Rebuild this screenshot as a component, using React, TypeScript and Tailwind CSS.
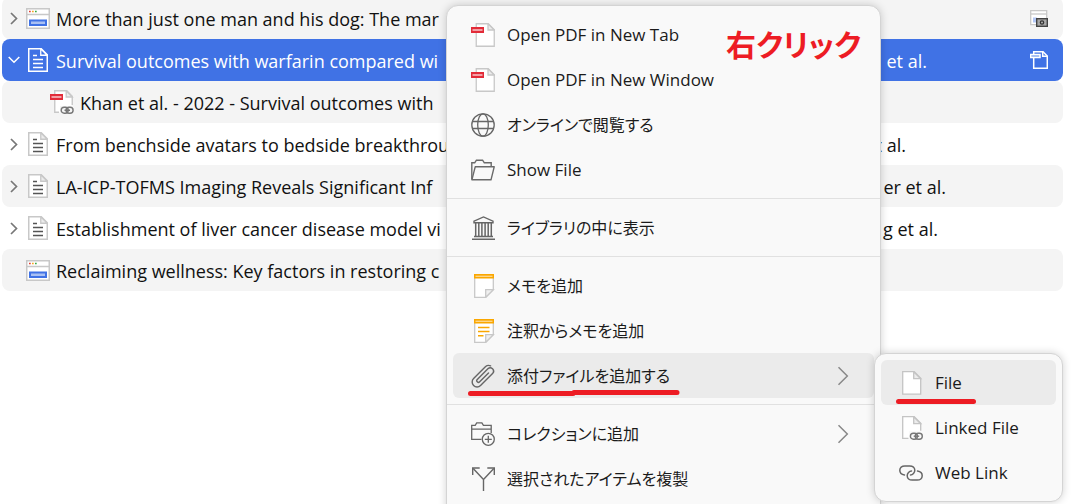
import React from 'react';
import clsx from 'clsx';

type IconProps = { selected?: boolean };

function ChevronRight() {
  return (
    <svg className="w-2 h-[13px]" viewBox="0 0 8 13" fill="none" stroke="currentColor" strokeWidth="1.7">
      <path d="M1 1l5.500 5.500L1 12" />
    </svg>
  );
}

function ChevronDown() {
  return (
    <svg className="w-3 h-2" viewBox="0 0 12 8" fill="none" stroke="currentColor" strokeWidth="1.5">
      <path d="M.7 1L6 6.300 11.300 1" />
    </svg>
  );
}

function SubmenuArrow() {
  return (
    <svg className="w-3 h-5 text-[#888]" viewBox="0 0 12 20" fill="none" stroke="currentColor" strokeWidth="1.500">
      <path d="M1.500 1.200L10.300 10l-8.800 8.800" />
    </svg>
  );
}

function ArticleIcon({ selected }: IconProps) {
  const outline = selected ? '#fff' : '#c8c8c8';
  return (
    <svg className="w-5 h-6" viewBox="0 0 20 24" fill="none">
      <path d="M.75.75h12.500l6 6v16.500H.75z" fill={selected ? 'none' : '#fff'} stroke={outline} strokeWidth="1.5" />
      <path d="M12.750.75v6.500h6.500z" fill={selected ? 'none' : '#ececec'} stroke={outline} strokeWidth="1.300" />
      <path d="M5 7.500h4M5 11.500h10M5 15.500h10M5 19.500h10" stroke={selected ? '#fff' : '#555'} strokeWidth="1.500" />
    </svg>
  );
}

function WebPageIcon() {
  return (
    <svg className="w-6 h-[21px]" viewBox="0 0 24 21" fill="none">
      <path d="M.75.75h22.500v19.500H.75z" fill="#fff" stroke="#c8c8c8" strokeWidth="1.5" />
      <path d="M1 6.500h22" stroke="#c8c8c8" strokeWidth="1.3" />
      <path d="M3 3.500h1.700" stroke="#e03a2e" strokeWidth="1.6" />
      <path d="M6 3.500h1.700" stroke="#f5a623" strokeWidth="1.6" />
      <path d="M9 3.500h1.700" stroke="#39a845" strokeWidth="1.6" />
      <path d="M3 11.500h18v6.500H3z" fill="#4072e5" />
      <path d="M5 14.700h14" stroke="#a9c0f3" strokeWidth="2.5" />
    </svg>
  );
}

function PdfLabel() {
  return (
    <>
      <path d="M0 4h13v6H0z" fill="#e22b38" />
      <path d="M1.500 7h10" stroke="#f2a0a6" strokeWidth="2" />
    </>
  );
}

function PdfIcon() {
  return (
    <svg className="size-6" viewBox="0 0 24 24" fill="none">
      <path d="M5.250.75h12l6 6v16.500h-18z" fill="#fff" stroke="#c8c8c8" strokeWidth="1.300" />
      <path d="M17 .75v6.250h6.250z" fill="#ececec" stroke="#c8c8c8" strokeWidth="1.300" />
      <PdfLabel />
    </svg>
  );
}

function SmallLink({ x, y }: { x: number; y: number }) {
  return (
    <g transform={`translate(${x} ${y})`} stroke="#777" strokeWidth="1.400" fill="none">
      <rect x=".7" y=".7" width="7" height="6" rx="3" />
      <rect x="5.600" y=".7" width="7" height="6" rx="3" />
      <path d="M4 3.700h5.500" />
    </g>
  );
}

function LinkedPdfIcon() {
  return (
    <svg className="size-6" viewBox="0 0 24 24" fill="none">
      <path d="M4.750.75h12l5.500 5.500V16H10v6.500H4.750z" fill="#fff" />
      <path d="M9 22.300H4.750V.75h12l5.500 5.500V15" stroke="#c8c8c8" strokeWidth="1.400" />
      <path d="M16.200.75V7h6z" fill="#ececec" stroke="#c8c8c8" strokeWidth="1.300" />
      <PdfLabel />
      <SmallLink x={10.500} y={16.500} />
    </svg>
  );
}

function SnapshotIcon() {
  return (
    <svg className="w-[18px] h-[17px]" viewBox="0 0 18 17" fill="none">
      <path d="M.7.7h16v14H.7z" fill="#fff" stroke="#c8c8c8" strokeWidth="1.300" />
      <path d="M1 4h15.500" stroke="#c8c8c8" strokeWidth="1.300" />
      <path d="M3 7.500h4v5H3z" fill="#b3c7f5" />
      <rect x="6.700" y="8.700" width="10.600" height="7.600" fill="#a8a8a8" stroke="#444" strokeWidth="1.400" />
      <circle cx="12" cy="12.500" r="1.700" stroke="#333" strokeWidth="1.200" />
    </svg>
  );
}

function AttachedPdfIcon() {
  return (
    <svg className="size-[18px]" viewBox="0 0 18 18" fill="none" stroke="#fff" strokeWidth="1.500">
      <path d="M3.700 3V.7h9.300l4.300 4.300v12.300H3.700V7" />
      <path d="M12.700.7v4.600h4.600" />
      <path d="M.6 3.600h9.400v3H.6z" fill="#8cacf0" />
    </svg>
  );
}

function GlobeIcon() {
  return (
    <svg className="size-6" viewBox="0 0 24 24" fill="none" stroke="#666" strokeWidth="1.300">
      <circle cx="12" cy="12" r="11.200" />
      <ellipse cx="12" cy="12" rx="5.300" ry="11.200" />
      <path d="M1.500 8.500h21M1.500 15.500h21" />
    </svg>
  );
}

function FolderIcon() {
  return (
    <svg className="size-6" viewBox="0 0 24 24" fill="none" stroke="#6a6a6a" strokeWidth="1.400">
      <path d="M.8 21.500V4.800h2.900l1.700-2.600h6.200l1.700 2.600h6.900v4" />
      <path d="M4.200 8.800h19L20 21.800H.9z" strokeLinejoin="round" />
    </svg>
  );
}

function LibraryIcon() {
  return (
    <svg className="size-6" viewBox="0 0 24 24" fill="none" stroke="#666" strokeWidth="1.400">
      <path d="M3 6.800V5.200L12.500.9 22 5.200v1.600z" />
      <path d="M4.700 7v13M7.800 7v13M10.900 7v13M14.100 7v13M17.200 7v13M20.300 7v13" strokeWidth="1.500" />
      <path d="M3 20.500h19M1 23.200h23" />
    </svg>
  );
}

function NoteIcon({ lines }: { lines?: boolean }) {
  return (
    <svg className="size-6" viewBox="0 0 24 24" fill="none">
      <path d="M3.700 3v20.300h11l7.600-7.600V3z" fill="#fff" stroke="#c8c8c8" strokeWidth="1.300" />
      <path d="M14.700 23.300v-7.600h7.600z" fill="#f0f0f0" stroke="#c8c8c8" strokeWidth="1.300" />
      <path d="M3 0h20v4.500H3z" fill="#faa700" />
      <path d="M4.500 2.300h17" stroke="#fdd892" strokeWidth="1.300" />
      {lines && <path d="M7 8.500h11.500M7 12.500h11.500M7 16.800h5.500" stroke="#faa700" strokeWidth="1.500" />}
    </svg>
  );
}

function PaperclipIcon() {
  return (
    <svg className="size-6" viewBox="0 0 24 24" fill="none" stroke="#666" strokeWidth="1.400" strokeLinecap="round">
      <path
        transform="translate(12 12) rotate(45)"
        d="M1.800-6V6.500a1.700 1.700 0 0 1-3.400 0V-8.500a3.300 3.300 0 0 1 6.600 0V8.500a4.900 4.900 0 0 1-9.800 0V-8.500a4.500 4.500 0 0 1 3-4"
      />
    </svg>
  );
}

function AddToCollectionIcon() {
  return (
    <svg className="size-6" viewBox="0 0 24 24" fill="none" stroke="#666" strokeWidth="1.300">
      <path d="M10.500 17.300H.7V3.400h3.500L5.700.9h5.200l1.500 2.500h7.800v7.500M.7 7.100h19.500" />
      <circle cx="17.300" cy="17.300" r="6" />
      <path d="M17.300 13.800v7M13.800 17.300h7" />
    </svg>
  );
}

function DuplicateIcon() {
  return (
    <svg className="size-6" viewBox="0 0 24 24" fill="none" stroke="#666" strokeWidth="1.400">
      <path d="M12.500 24V12.500L2.200 1.500M12.500 12.500L22.800 1.500" />
      <path d="M1.700 8V1h7M16.300 1h7v7" />
    </svg>
  );
}

function FileIcon({ linked }: { linked?: boolean }) {
  return (
    <svg className="size-6" viewBox="0 0 24 24" fill="none">
      {linked ? (
        <>
          <path d="M3.700.7h11.500l6.500 6.500v8H10v7.500H3.700z" fill="#fff" />
          <path d="M9.500 22.300H3.700V.7h11.500l6.500 6.500v7.500" stroke="#c4c4c4" strokeWidth="1.300" />
        </>
      ) : (
        <path d="M3.700.7h11.500l6.500 6.500v16H3.700z" fill="#fff" stroke="#c4c4c4" strokeWidth="1.300" />
      )}
      <path d="M14.700.7v7h7z" fill="#ececec" stroke="#c4c4c4" strokeWidth="1.300" />
      {linked && <SmallLink x={10.700} y={16.500} />}
    </svg>
  );
}

function WebLinkIcon() {
  return (
    <svg className="size-6" viewBox="0 0 24 24" fill="none" stroke="#666" strokeWidth="1.500" strokeLinecap="round">
      <path d="M5.500 14C2.800 13.600.8 11.700.8 9.300c0-2.500 2.100-4.400 5-4.400h5c2.900 0 5 1.900 5 4.400s-2.100 4.700-4.300 4.700" />
      <path d="M18.500 10c2.700.4 4.700 2.300 4.700 4.700 0 2.500-2.100 4.400-5 4.400h-5c-2.900 0-5-1.900-5-4.400s2.100-4.700 4.300-4.700" />
    </svg>
  );
}

type Item = {
  title: string;
  icon: React.ReactNode;
  state?: 'open' | 'closed';
  child?: boolean;
  selected?: boolean;
  creator?: string;
  creatorWidth?: string;
  attachment?: React.ReactNode;
};

const items: Item[] = [
  { title: 'More than just one man and his dog: The mar', icon: <WebPageIcon />, state: 'closed', attachment: <SnapshotIcon /> },
  {
    title: 'Survival outcomes with warfarin compared wi',
    icon: <ArticleIcon selected />,
    state: 'open',
    selected: true,
    creator: 'et al.',
    creatorWidth: 'w-[167px]',
    attachment: <AttachedPdfIcon />,
  },
  { title: 'Khan et al. - 2022 - Survival outcomes with', icon: <LinkedPdfIcon />, child: true },
  { title: 'From benchside avatars to bedside breakthrou', icon: <ArticleIcon />, state: 'closed', creator: 'et al.', creatorWidth: 'w-[146px]' },
  { title: 'LA-ICP-TOFMS Imaging Reveals Significant Inf', icon: <ArticleIcon />, state: 'closed', creator: 'er et al.', creatorWidth: 'w-[186px]' },
  { title: 'Establishment of liver cancer disease model vi', icon: <ArticleIcon />, state: 'closed', creator: 'g et al.', creatorWidth: 'w-[178px]' },
  { title: 'Reclaiming wellness: Key factors in restoring c', icon: <WebPageIcon /> },
];

function ItemRow({ item, striped }: { item: Item; striped: boolean }) {
  return (
    <tr
      className={clsx(
        '[&>td]:p-0 [&>td:first-child]:rounded-l-lg [&>td:last-child]:rounded-r-lg',
        item.selected ? '[&>td]:bg-[#4072e5] text-white' : 'text-[#111]',
        striped && !item.selected && '[&>td]:bg-[#f4f4f4]'
      )}
    >
      <td className="h-[42px] overflow-hidden">
        <div className="flex items-center whitespace-nowrap">
          <span className={clsx('flex shrink-0 justify-center', item.child ? 'w-12' : 'w-6')}>
            {item.state && (
              <button
                type="button"
                aria-label={item.state === 'open' ? 'Collapse' : 'Expand'}
                className={item.selected ? 'text-white' : 'text-[#777]'}
              >
                {item.state === 'open' ? <ChevronDown /> : <ChevronRight />}
              </button>
            )}
          </span>
          <span className="flex w-6 shrink-0 justify-center mr-[6px]">{item.icon}</span>
          <span className="pt-[2px]">{item.title}</span>
        </div>
      </td>
      <td className="whitespace-nowrap">
        <div className={clsx('pt-[2px] text-right', item.creatorWidth)}>{item.creator}</div>
      </td>
      <td>
        <div className="flex justify-end pr-[15px]">{item.attachment}</div>
      </td>
    </tr>
  );
}

type MenuItemProps = {
  icon: React.ReactNode;
  label: string;
  lang?: 'ja';
  active?: boolean;
  submenu?: boolean;
  children?: React.ReactNode;
};

function MenuItem({ icon, label, lang, active, submenu, children }: MenuItemProps) {
  return (
    <button
      type="button"
      role="menuitem"
      lang={lang}
      className={clsx(
        'relative flex h-[45px] w-full items-center gap-3 rounded-md pl-[18px] pr-[25px] text-left whitespace-nowrap',
        lang === 'ja' ? "text-[16px] [font-feature-settings:'palt']" : 'text-[17px]',
        active && 'bg-[#ebebeb]'
      )}
    >
      {icon}
      <span className="flex-1">{label}</span>
      {submenu && <SubmenuArrow />}
      {children}
    </button>
  );
}

function Separator() {
  return <div role="separator" className="-mx-[6px] my-[6px] h-px bg-[#e1e1e1]" />;
}

export default function App() {
  return (
    <div className="relative min-h-screen overflow-hidden bg-white font-['Open_Sans','Noto_Sans_CJK_JP',sans-serif]">
      <main className="pl-[2px] pr-2">
        <table className="-mt-[3px] w-full table-fixed border-separate border-spacing-0 text-[18px] leading-7">
          <colgroup>
            <col className="w-[758px]" />
            <col />
            <col className="w-14" />
          </colgroup>
          <tbody>
            {items.map((item, i) => (
              <ItemRow key={item.title} item={item} striped={i % 2 === 0} />
            ))}
          </tbody>
        </table>
      </main>

      <div
        role="menu"
        className="absolute left-[446px] top-[5px] w-[435px] rounded-t-xl border border-[#d4d4d4] bg-[#f9f9f9] px-[6px] pt-[6px] pb-6 leading-6 text-[#1b1b1b] shadow-[0_0_8px_rgba(0,0,0,0.18)]"
      >
        <MenuItem icon={<PdfIcon />} label="Open PDF in New Tab" />
        <MenuItem icon={<PdfIcon />} label="Open PDF in New Window" />
        <MenuItem icon={<GlobeIcon />} label="オンラインで閲覧する" lang="ja" />
        <MenuItem icon={<FolderIcon />} label="Show File" />
        <Separator />
        <MenuItem icon={<LibraryIcon />} label="ライブラリの中に表示" lang="ja" />
        <Separator />
        <MenuItem icon={<NoteIcon />} label="メモを追加" lang="ja" />
        <MenuItem icon={<NoteIcon lines />} label="注釈からメモを追加" lang="ja" />
        <MenuItem icon={<PaperclipIcon />} label="添付ファイルを追加する" lang="ja" active submenu>
          <svg className="absolute left-[15px] top-9 h-2 w-[212px]" viewBox="0 0 212 8" stroke="#ed1c24" strokeWidth="5" strokeLinecap="round">
            <path d="M2.500 4.500H105M106 3.500h103" />
          </svg>
        </MenuItem>
        <Separator />
        <MenuItem icon={<AddToCollectionIcon />} label="コレクションに追加" lang="ja" submenu />
        <MenuItem icon={<DuplicateIcon />} label="選択されたアイテムを複製" lang="ja" />
      </div>

      <p
        lang="ja"
        className="absolute left-[726px] top-[22px] text-[30px] leading-[46px] font-bold text-[#ed1c24] whitespace-nowrap [font-feature-settings:'palt']"
      >
        右クリック
      </p>

      <div
        role="menu"
        className="absolute left-[874px] top-[353px] w-[189px] rounded-xl border border-[#d4d4d4] bg-[#f9f9f9] p-[6px] leading-6 text-[#1b1b1b] shadow-[0_0_8px_rgba(0,0,0,0.18)]"
      >
        <MenuItem icon={<FileIcon />} label="File" active>
          <svg className="absolute left-[15px] top-[38px] h-2 w-20" viewBox="0 0 80 8" stroke="#ed1c24" strokeWidth="5" strokeLinecap="round">
            <path d="M2.500 3.500h75" />
          </svg>
        </MenuItem>
        <MenuItem icon={<FileIcon linked />} label="Linked File" />
        <MenuItem icon={<WebLinkIcon />} label="Web Link" />
      </div>
    </div>
  );
}
